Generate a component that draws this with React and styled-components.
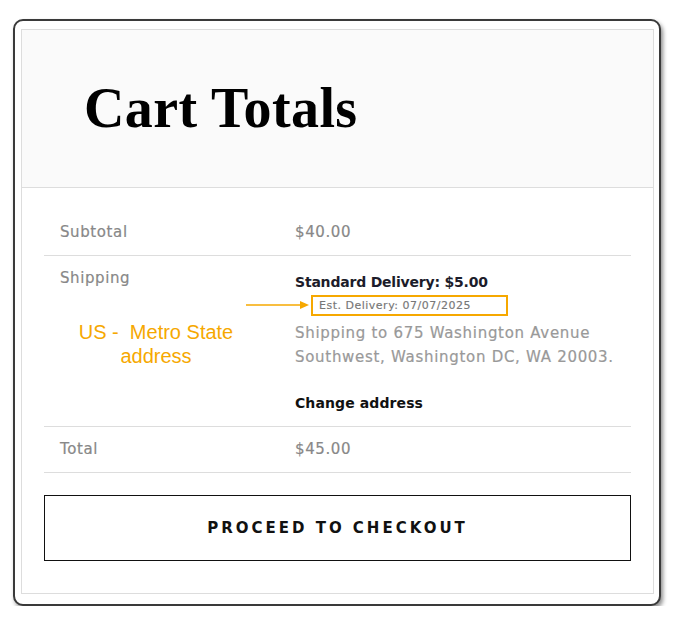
import styled, { createGlobalStyle } from "styled-components";

const GlobalStyle = createGlobalStyle`
  html, body {
    margin: 0;
    padding: 0;
    background: #ffffff;
  }
  body {
    padding: 19px 0 0 13px;
    font-family: "DejaVu Sans", "Open Sans", sans-serif;
  }
`;

const Frame = styled.div`
  box-sizing: border-box;
  width: 648px;
  height: 587px;
  border: 2px solid #3a3a3a;
  border-radius: 10px;
  background: #ffffff;
  box-shadow: 2px 3px 4px rgba(0, 0, 0, 0.45);
  padding: 8px 5px 10px 6px;
`;

const Card = styled.div`
  box-sizing: border-box;
  height: 100%;
  border: 1px solid #dddddd;
  display: flex;
  flex-direction: column;
  overflow: hidden;
`;

const Header = styled.div`
  box-sizing: border-box;
  flex-shrink: 0;
  height: 158px;
  background: #fafafa;
  border-bottom: 1px solid #dddddd;
  display: flex;
  align-items: center;
  padding: 0 0 2px 62px;
`;

const Title = styled.h2`
  margin: 0;
  font-family: "Liberation Serif", "Times New Roman", serif;
  font-weight: 700;
  font-size: 56px;
  letter-spacing: 0.4px;
  color: #000000;
`;

const Body = styled.div`
  padding: 22px 22px 33px;
  display: flex;
  flex-direction: column;
`;

const Row = styled.div`
  display: grid;
  grid-template-columns: 235px 1fr;
  padding: 13px 16px;
  border-bottom: 1px solid #dddddd;
`;

const Label = styled.div`
  font-size: 15px;
  line-height: 19px;
  letter-spacing: 0.6px;
  color: #888888;
  -webkit-text-stroke: 0.2px #888888;
`;

const Value = styled.div`
  font-size: 15px;
  line-height: 19px;
  letter-spacing: 0.6px;
  color: #888888;
  display: flex;
  flex-direction: column;
  align-items: flex-start;
`;

const Price = styled.span`
  -webkit-text-stroke: 0.2px #888888;
`;

const Note = styled.div`
  width: 192px;
  margin-top: 32px;
  text-align: center;
  font-family: "Liberation Sans", Arial, sans-serif;
  font-size: 20px;
  line-height: 24px;
  letter-spacing: 0;
  color: #f6a800;
  white-space: pre;
`;

const Method = styled.div`
  font-size: 14px;
  line-height: 20px;
  font-weight: 700;
  letter-spacing: -0.2px;
  color: #1c1c2a;
  margin-top: 3px;
`;

const EstBox = styled.div`
  position: relative;
  box-sizing: border-box;
  width: 197px;
  height: 21px;
  margin: 3px 0 0 16px;
  padding: 0 0 0 6px;
  border: 2px solid #f6a800;
  font-size: 11px;
  line-height: 17px;
  letter-spacing: 0.5px;
  color: #777777;
  -webkit-text-stroke: 0.15px #777777;
`;

const Arrow = styled.svg`
  position: absolute;
  left: -67px;
  top: 3px;
  width: 64px;
  height: 10px;
`;

const Address = styled.div`
  margin-top: 5px;
  font-size: 15px;
  line-height: 24px;
  letter-spacing: 0.7px;
  color: #999999;
  white-space: nowrap;
  -webkit-text-stroke: 0.2px #999999;
`;

const ChangeLink = styled.a`
  margin-top: 24px;
  font-size: 14px;
  line-height: 20px;
  font-weight: 700;
  letter-spacing: 0.1px;
  color: #111111;
  text-decoration: none;
  cursor: pointer;
`;

const CheckoutButton = styled.button`
  margin-top: 22px;
  height: 66px;
  border: 1px solid #111111;
  background: #ffffff;
  font-family: "DejaVu Sans", "Open Sans", sans-serif;
  font-size: 15px;
  font-weight: 700;
  letter-spacing: 3px;
  color: #111111;
  cursor: pointer;
`;

function App() {
  return (
    <>
      <GlobalStyle />
      <Frame>
        <Card>
          <Header>
            <Title>Cart Totals</Title>
          </Header>
          <Body>
            <Row>
              <Label>Subtotal</Label>
              <Value>
                <Price>$40.00</Price>
              </Value>
            </Row>
            <Row>
              <div>
                <Label>Shipping</Label>
                <Note>{"US -  Metro State\naddress"}</Note>
              </div>
              <Value>
                <Method>Standard Delivery: $5.00</Method>
                <EstBox>
                  <Arrow viewBox="0 0 64 10">
                    <line x1="0" y1="5" x2="56" y2="5" stroke="#f6a800" strokeWidth="1.6" />
                    <path d="M54 1 L63 5 L54 9 Z" fill="#f6a800" />
                  </Arrow>
                  Est. Delivery: 07/07/2025
                </EstBox>
                <Address>
                  Shipping to 675 Washington Avenue
                  <br />
                  Southwest, Washington DC, WA 20003.
                </Address>
                <ChangeLink>Change address</ChangeLink>
              </Value>
            </Row>
            <Row>
              <Label>Total</Label>
              <Value>
                <Price>$45.00</Price>
              </Value>
            </Row>
            <CheckoutButton>PROCEED TO CHECKOUT</CheckoutButton>
          </Body>
        </Card>
      </Frame>
    </>
  );
}

export default App;
